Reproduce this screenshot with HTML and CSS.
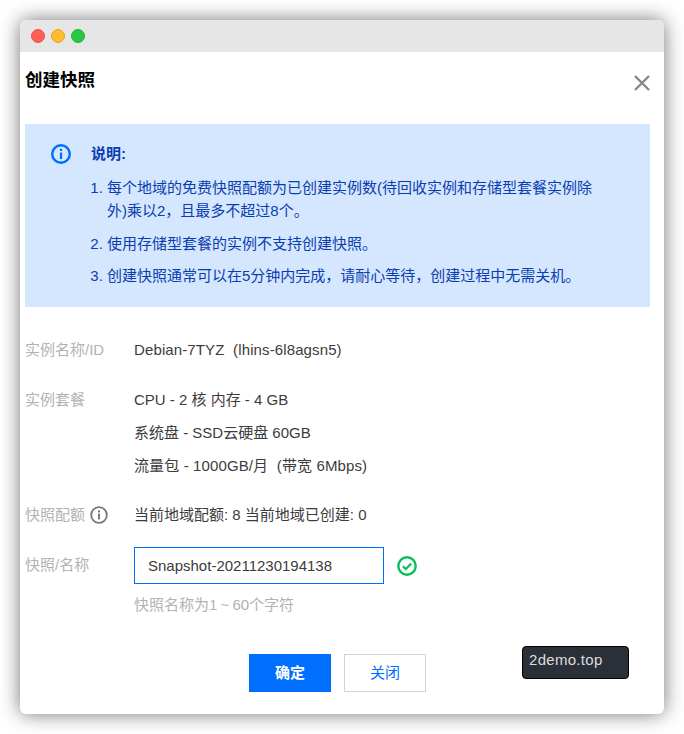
FILE: index.html
```html
<!DOCTYPE html>
<html lang="zh">
<head>
<meta charset="utf-8">
<title>创建快照</title>
<link rel="stylesheet" href="styles.css">
</head>
<body>
<div class="window">
  <div class="titlebar">
    <span class="dot dot-red"></span>
    <span class="dot dot-yellow"></span>
    <span class="dot dot-green"></span>
  </div>
  <div class="dialog">
    <div class="head">
      <h1 class="title">创建快照</h1>
      <svg class="close" width="16" height="16" viewBox="0 0 16 16"><path d="M1 1 15 15M15 1 1 15" stroke="#888" stroke-width="2.4" fill="none"/></svg>
    </div>
    <div class="alert">
      <svg class="alert-icon" width="20" height="20" viewBox="0 0 20 20"><circle cx="10" cy="10" r="8.8" fill="none" stroke="#006eff" stroke-width="2.4"/><rect x="8.9" y="8.5" width="2.2" height="6.5" fill="#006eff"/><rect x="8.9" y="4.8" width="2.2" height="2.2" fill="#006eff"/></svg>
      <div class="alert-body">
        <div class="alert-title">说明:</div>
        <ol class="alert-list">
          <li>每个地域的免费快照配额为已创建实例数(待回收实例和存储型套餐实例除外)乘以2，且最多不超过8个。</li>
          <li>使用存储型套餐的实例不支持创建快照。</li>
          <li>创建快照通常可以在5分钟内完成，请耐心等待，创建过程中无需关机。</li>
        </ol>
      </div>
    </div>
    <div class="form">
      <div class="row row-name">
        <div class="label">实例名称/ID</div>
        <div class="value value-wide">Debian-7TYZ&nbsp;&nbsp;(lhins-6l8agsn5)</div>
      </div>
      <div class="row row-plan">
        <div class="label">实例套餐</div>
        <div class="value stack">
          <div>CPU - 2 核 内存 - 4 GB</div>
          <div>系统盘 - SSD云硬盘 60GB</div>
          <div class="value-wide">流量包 - 1000GB/月&nbsp;&nbsp;(带宽 6Mbps)</div>
        </div>
      </div>
      <div class="row row-quota">
        <div class="label label-icon">快照配额
          <svg width="18" height="18" viewBox="0 0 18 18"><circle cx="9" cy="9" r="7.8" fill="none" stroke="#777" stroke-width="1.8"/><rect x="8" y="7.6" width="2" height="5.8" fill="#777"/><rect x="8" y="4.4" width="2" height="2" fill="#777"/></svg>
        </div>
        <div class="value">当前地域配额: 8 当前地域已创建: 0</div>
      </div>
      <div class="row row-input">
        <div class="label label-input">快照/名称</div>
        <div class="field">
          <div class="field-line">
            <div class="input">Snapshot-20211230194138</div>
            <svg width="20" height="20" viewBox="0 0 20 20"><circle cx="10" cy="10" r="8.7" fill="none" stroke="#0abf5b" stroke-width="2.4"/><path d="M5.8 10.2 8.8 13 14.2 7.6" fill="none" stroke="#0abf5b" stroke-width="2.2"/></svg>
          </div>
          <div class="hint">快照名称为1 ~ 60个字符</div>
        </div>
      </div>
    </div>
    <div class="actions">
      <div class="btn btn-primary">确定</div>
      <div class="btn btn-weak">关闭</div>
    </div>
  </div>
  <div class="watermark">2demo.top</div>
</div>
</body>
</html>
```
FILE: styles.css
```css
* { box-sizing: border-box; }
html, body { margin: 0; padding: 0; }
body {
  width: 684px;
  height: 734px;
  overflow: hidden;
  background: #fff;
  padding: 20px;
  font-family: "Liberation Sans", "Noto Sans CJK SC", sans-serif;
  font-size: 15px;
  color: #3c3c3c;
}
.window {
  position: relative;
  width: 644px;
  height: 694px;
  background: #fff;
  border-radius: 6px;
  box-shadow: 0 0 20px rgba(0,0,0,.55);
}
.titlebar {
  height: 32px;
  background: #e6e6e6;
  border-radius: 6px 6px 0 0;
  display: flex;
  align-items: center;
  gap: 6px;
  padding-left: 11px;
}
.dot { width: 14px; height: 14px; border-radius: 50%; }
.dot-red { background: #ff5f57; border: 1px solid #e5534b; }
.dot-yellow { background: #febc2e; border: 1px solid #e3a529; }
.dot-green { background: #28c840; border: 1px solid #24b239; }
.dialog { padding: 0 14px 0 5px; }
.head {
  height: 72px;
  display: flex;
  justify-content: space-between;
  align-items: flex-start;
}
.title {
  margin: 16px 0 0;
  font-size: 17.5px;
  font-weight: 700;
  line-height: 24px;
  color: #000;
}
.close { margin: 23px 0 0 0; flex: none; }
.alert {
  height: 183px;
  background: #d5e7ff;
  display: flex;
  padding: 20px 0 0 26px;
  color: #0a3db0;
}
.alert-icon { flex: none; }
.alert-body { margin-left: 20px; width: 505px; line-height: 23px; }
.alert-title { font-weight: 700; line-height: 20px; }
.alert-list { margin: 12px 0 0; padding: 0 0 0 16px; }
.alert-list li { margin-bottom: 9.5px; }
.form { margin-top: 33px; }
.row { display: flex; }
.label { width: 109px; color: #b2b2b2; line-height: 20px; flex: none; }
.label-icon { display: flex; align-items: center; gap: 5px; }
.label-input { padding-top: 8px; }
.value { line-height: 20px; }
.value-wide { letter-spacing: .12px; }
.stack > div { margin-bottom: 13px; }
.stack > div:last-child { margin-bottom: 0; }
.row-plan { margin-top: 30px; }
.row-quota { margin-top: 29px; }
.row-input { margin-top: 22px; }
.field-line { display: flex; align-items: center; gap: 13px; }
.input {
  width: 250px;
  height: 37px;
  border: 1px solid #006eff;
  padding: 0 13px;
  line-height: 35px;
}
.hint { margin-top: 11px; color: #b2b2b2; line-height: 20px; word-spacing: -1px; }
.actions {
  margin-top: 39px;
  display: flex;
  justify-content: center;
  gap: 13px;
}
.btn { width: 82px; height: 38px; line-height: 38px; text-align: center; }
.btn-primary { background: #006eff; color: #fff; font-weight: 700; }
.btn-weak { border: 1px solid #cfd5de; color: #006eff; line-height: 36px; }
.watermark {
  position: absolute;
  left: 502px;
  top: 626px;
  width: 107px;
  height: 33px;
  background: #2b2f38;
  border: 1px solid #000;
  border-radius: 4px;
  color: #ddd;
  padding-left: 6px;
  line-height: 26px;
  letter-spacing: .3px;
}
```
